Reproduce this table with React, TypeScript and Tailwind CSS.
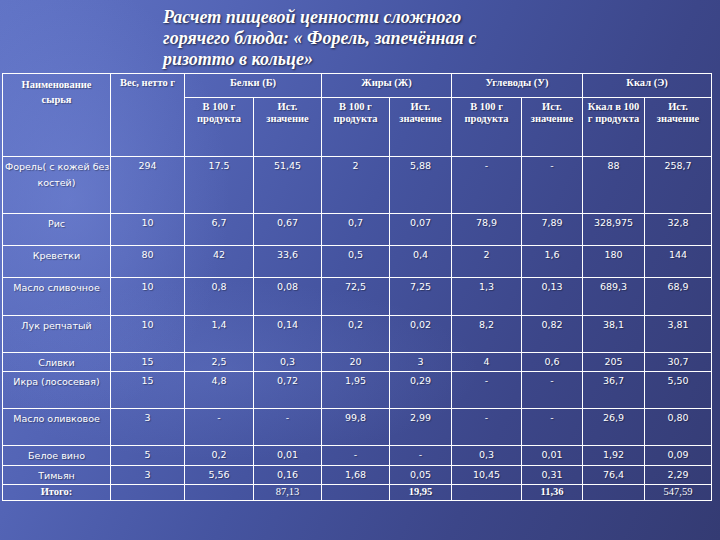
import React from 'react';

type Row = { cells: string[]; h: string; name?: React.ReactNode };

const COLS = ['w-[108px]', 'w-[74px]', 'w-[69px]', 'w-[68px]', 'w-[68px]', 'w-[62px]', 'w-[70px]', 'w-[61px]', 'w-[62px]', 'w-[67px]'];

const ROWS: Row[] = [
  {
    cells: ['', '294', '17.5', '51,45', '2', '5,88', '-', '-', '88', '258,7'],
    h: 'h-[57px]',
    name: (
      <>
        Форель( с кожей без
        <br />
        костей)
      </>
    ),
  },
  { cells: ['Рис', '10', '6,7', '0,67', '0,7', '0,07', '78,9', '7,89', '328,975', '32,8'], h: 'h-[32px]' },
  { cells: ['Креветки', '80', '42', '33,6', '0,5', '0,4', '2', '1,6', '180', '144'], h: 'h-[32px]' },
  { cells: ['Масло сливочное', '10', '0,8', '0,08', '72,5', '7,25', '1,3', '0,13', '689,3', '68,9'], h: 'h-[38px]' },
  { cells: ['Лук репчатый', '10', '1,4', '0,14', '0,2', '0,02', '8,2', '0,82', '38,1', '3,81'], h: 'h-[37px]' },
  { cells: ['Сливки', '15', '2,5', '0,3', '20', '3', '4', '0,6', '205', '30,7'], h: 'h-[19px]' },
  { cells: ['Икра (лососевая)', '15', '4,8', '0,72', '1,95', '0,29', '-', '-', '36,7', '5,50'], h: 'h-[37px]' },
  { cells: ['Масло оливковое', '3', '-', '-', '99,8', '2,99', '-', '-', '26,9', '0,80'], h: 'h-[37px]' },
  { cells: ['Белое вино', '5', '0,2', '0,01', '-', '-', '0,3', '0,01', '1,92', '0,09'], h: 'h-[20px]' },
  { cells: ['Тимьян', '3', '5,56', '0,16', '1,68', '0,05', '10,45', '0,31', '76,4', '2,29'], h: 'h-[19px]' },
];

const TOTALS = ['Итого:', '', '', '87,13', '', '19,95', '', '11,36', '', '547,59'];
const TOTAL_BOLD = [true, false, false, false, false, true, false, true, false, false];

const td = 'border border-white align-top text-center px-[2px]';
const head = `${td} font-bold text-[10.5px] leading-[12px] [font-family:'Liberation_Serif',serif]`;
const data = `${td} pt-[2px] text-[9.5px] leading-[13px] [font-family:'DejaVu_Sans',sans-serif]`;

export default function App() {
  return (
    <div className="w-[720px] h-[540px] overflow-hidden text-white bg-[radial-gradient(ellipse_160px_220px_at_70px_200px,rgba(130,150,230,0.35),transparent),radial-gradient(ellipse_260px_90px_at_220px_370px,rgba(120,140,220,0.22),transparent),linear-gradient(115deg,#6174c6_0%,#5364b5_25%,#4554a0_48%,#3c4689_72%,#343b73_100%)] [text-shadow:1px_1px_1px_rgba(0,0,0,0.35)]">
      <h1 className="pl-[163px] pt-[7px] text-[18px] leading-[21px] font-bold italic [font-family:'Liberation_Serif',serif] [text-shadow:1px_1px_2px_rgba(0,0,0,0.6)]">
        Расчет пищевой ценности сложного
        <br />
        горячего блюда: « Форель, запечённая с
        <br />
        ризотто в кольце»
      </h1>
      <table className="mt-[3px] ml-[2px] w-[709px] table-fixed border-collapse">
        <colgroup>
          {COLS.map((c, i) => (
            <col key={i} className={c} />
          ))}
        </colgroup>
        <thead>
          <tr className="h-[24px]">
            <th rowSpan={2} className={`${head} pt-[3px] leading-[15px]`}>
              Наименование
              <br />
              сырья
            </th>
            <th rowSpan={2} className={`${head} pt-[3px]`}>
              Вес, нетто г
            </th>
            <th colSpan={2} className={`${head} pt-[3px]`}>Белки (Б)</th>
            <th colSpan={2} className={`${head} pt-[3px]`}>Жиры (Ж)</th>
            <th colSpan={2} className={`${head} pt-[3px]`}>Углеводы (У)</th>
            <th colSpan={2} className={`${head} pt-[3px]`}>Ккал (Э)</th>
          </tr>
          <tr className="h-[59px]">
            {[0, 1, 2, 3].map((i) => (
              <React.Fragment key={i}>
                <th className={`${head} pt-[3px]`}>
                  {i === 3 ? 'Ккал в 100' : 'В 100 г'}
                  <br />
                  {i === 3 ? 'г продукта' : 'продукта'}
                </th>
                <th className={`${head} pt-[3px]`}>
                  Ист.
                  <br />
                  значение
                </th>
              </React.Fragment>
            ))}
          </tr>
        </thead>
        <tbody>
          {ROWS.map((r, ri) => (
            <tr key={ri} className={r.h}>
              {r.cells.map((c, ci) => (
                <td
                  key={ci}
                  className={ci === 0 ? `${data} leading-[16px] pt-0 whitespace-nowrap` : data}
                >
                  {ci === 0 && r.name ? r.name : c}
                </td>
              ))}
            </tr>
          ))}
          <tr className="h-[16px]">
            {TOTALS.map((c, i) => (
              <td
                key={i}
                className={`${td} pt-[1px] text-[10.5px] leading-[12px] [font-family:'Liberation_Serif',serif] ${TOTAL_BOLD[i] ? 'font-bold' : ''}`}
              >
                {c}
              </td>
            ))}
          </tr>
        </tbody>
      </table>
    </div>
  );
}
